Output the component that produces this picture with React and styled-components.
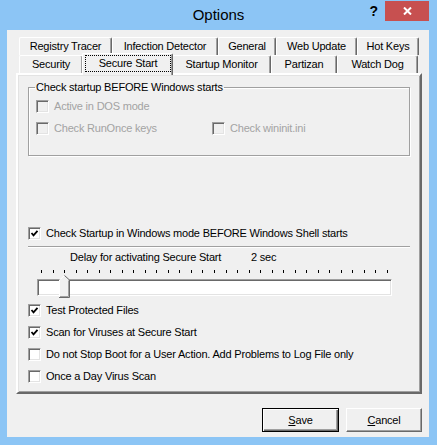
import React from 'react';
import styled, { createGlobalStyle } from 'styled-components';

const GlobalStyle = createGlobalStyle`
    html, body {
        margin: 0;
        padding: 0;
    }
    body {
        width: 437px;
        height: 445px;
        overflow: hidden;
        font-family: "Liberation Sans", Arial, sans-serif;
        font-size: 11px;
        letter-spacing: -0.2px;
        color: #000;
    }
    * {
        box-sizing: border-box;
    }
`

const Window = styled.div`
    width: 437px;
    height: 445px;
    background-color: #8cc5f5;
    display: flex;
    flex-direction: column;
`

const TitleBar = styled.div`
    height: 30px;
    display: grid;
    grid-template-columns: 1fr auto 1fr;
    align-items: start;
    letter-spacing: 0;
`

const Title = styled.div`
    grid-column: 2;
    font-size: 15px;
    line-height: 30px;
    color: #000;
`

const Controls = styled.div`
    grid-column: 3;
    justify-self: end;
    display: flex;
    align-items: center;
    padding: 1px 8px 0 0;
    gap: 7px;
`

const Help = styled.span`
    font-weight: bold;
    font-size: 14px;
    line-height: 20px;
`

const CloseButton = styled.div`
    width: 44px;
    height: 20px;
    background-color: #c75050;
    display: flex;
    align-items: center;
    justify-content: center;
`

const Client = styled.div`
    flex: 1;
    margin: 0 8px 8px 7px;
    background-color: #f0f0f0;
    padding: 7px 7px 0 9px;
    display: flex;
    flex-direction: column;
`

const TabRow = styled.div`
    display: flex;
    align-items: flex-start;
    margin-left: 3px;
    height: 18px;
`

const Tab = styled.div`
    width: ${p => p.$active ? p.$w + 2 : p.$w}px;
    height: ${p => p.$active ? 22 : 18}px;
    margin: ${p => p.$active ? '-2px -1px -2px' : '0'};
    position: relative;
    z-index: ${p => p.$active ? 1 : 0};
    background-color: #f0f0f0;
    border-top: 1px solid #fff;
    border-left: 1px solid #fff;
    border-right: 1px solid #696969;
    border-radius: 2px 2px 0 0;
    box-shadow: inset -1px 0 #a0a0a0;
    text-align: center;
    line-height: 17px;
    white-space: nowrap;
`

const Focus = styled.span`
    display: block;
    margin: 1px 1px 0 2px;
    border: 1px dotted #000;
    line-height: 15px;
`

const Panel = styled.div`
    height: 321px;
    border: 2px solid;
    border-color: #fff #696969 #696969 #fff;
    box-shadow: inset 1px 1px #e3e3e3, inset -1px -1px #a0a0a0;
    padding: 6px 10px 0 10px;
    display: flex;
    flex-direction: column;
`

const Group = styled.fieldset`
    margin: 0;
    padding: 1px 7px 16px 7px;
    min-width: 0;
    border: 1px solid #a0a0a0;
    box-shadow: inset 1px 1px #fff, 1px 1px #fff;
`

const Legend = styled.legend`
    padding: 0 1px;
    margin-left: -1px;
    line-height: 13px;
    font-size: 11px;
`

const GroupGrid = styled.div`
    display: grid;
    grid-template-columns: 176px 1fr;
`

const CheckRow = styled.label`
    display: flex;
    align-items: center;
    gap: 5px;
    height: 22px;
    margin-top: ${p => p.$top || 0}px;
    color: ${p => p.$disabled ? '#a3a3a3' : '#000'};
    white-space: nowrap;
    grid-column: ${p => p.$span ? '1 / -1' : 'auto'};
`

const Box = styled.span`
    width: 13px;
    height: 13px;
    flex: none;
    border: 1px solid;
    border-color: #a0a0a0 #fff #fff #a0a0a0;
    box-shadow: inset 1px 1px #696969, inset -1px -1px #e3e3e3;
    background-color: ${p => p.$disabled ? '#f0f0f0' : '#fff'};
    display: flex;
    align-items: center;
    justify-content: center;
`

const Separator = styled.div`
    margin-top: 2px;
    border-top: 1px solid #a0a0a0;
    border-bottom: 1px solid #fff;
`

const DelayLabel = styled.div`
    height: 18px;
    line-height: 18px;
    padding-left: 42px;
    white-space: nowrap;
    span {
        display: inline-block;
        width: 181px;
    }
`

const Slider = styled.div`
    position: relative;
    margin-left: 9px;
    width: 355px;
    height: 33px;
`

const Ticks = styled.div`
    display: flex;
    justify-content: space-between;
    padding: 4px 4px 0;
    height: 7px;
`

const Tick = styled.span`
    width: 1px;
    height: 3px;
    background-color: #000;
`

const Track = styled.div`
    margin-top: 6px;
    height: 17px;
    background-color: #fff;
    border: 1px solid;
    border-color: #a0a0a0 #fff #fff #a0a0a0;
    box-shadow: inset 1px 1px #696969, inset -1px -1px #e3e3e3;
`

const Thumb = styled.svg`
    position: absolute;
    top: 9px;
`

const ButtonRow = styled.div`
    display: flex;
    justify-content: flex-end;
    gap: 7px;
    margin-top: 14px;
`

const Button = styled.div`
    width: ${p => p.$w}px;
    height: 24px;
    background-color: #f0f0f0;
    border: 1px solid;
    border-color: ${p => p.$default ? '#000' : '#fff #696969 #696969 #fff'};
    box-shadow: ${p => p.$default
        ? 'inset 1px 1px #fff, inset -1px -1px #696969, inset -2px -2px #a0a0a0'
        : 'inset -1px -1px #a0a0a0'};
    display: flex;
    align-items: center;
    justify-content: center;
`

const Check = ({ checked, disabled }) => (
    <Box $disabled={disabled}>
        {checked && (
            <svg width="9" height="9" viewBox="0 0 9 9">
                <polyline points="1.5,4 3.5,6.3 7.5,1.8" fill="none" stroke="#000" strokeWidth="1.8" />
            </svg>
        )}
    </Box>
);

const Option = ({ label, checked, disabled, top, span }) => (
    <CheckRow $disabled={disabled} $top={top} $span={span}>
        <Check checked={checked} disabled={disabled} />
        {label}
    </CheckRow>
);

const backTabs = [
    ['Registry Tracer', 93],
    ['Infection Detector', 106],
    ['General', 58],
    ['Web Update', 81],
    ['Hot Keys', 62],
];

const frontTabs = [
    ['Security', 64],
    ['Secure Start', 89, true],
    ['Startup Monitor', 99],
    ['Partizan', 66],
    ['Watch Dog', 81],
];

const TICKS = 31;
const DELAY = 2;

const App = () => {
    const thumbLeft = 4 + DELAY * (347 / (TICKS - 1)) - 5;
    return (
        <Window>
            <GlobalStyle />
            <TitleBar>
                <Title>Options</Title>
                <Controls>
                    <Help>?</Help>
                    <CloseButton>
                        <svg width="9" height="8" viewBox="0 0 9 8">
                            <path d="M1 0.5 L8 7.5 M8 0.5 L1 7.5" stroke="#fff" strokeWidth="2" />
                        </svg>
                    </CloseButton>
                </Controls>
            </TitleBar>
            <Client>
                <TabRow>
                    {backTabs.map(([name, w]) => <Tab key={name} $w={w}>{name}</Tab>)}
                </TabRow>
                <TabRow>
                    {frontTabs.map(([name, w, active]) => (
                        <Tab key={name} $w={w} $active={active}>
                            {active ? <Focus>{name}</Focus> : name}
                        </Tab>
                    ))}
                </TabRow>
                <Panel>
                    <Group>
                        <Legend>Check startup BEFORE Windows starts</Legend>
                        <GroupGrid>
                            <Option label="Active in DOS mode" disabled span />
                            <Option label="Check RunOnce keys" disabled />
                            <Option label="Check wininit.ini" disabled />
                        </GroupGrid>
                    </Group>
                    <Option label="Check Startup in Windows mode BEFORE Windows Shell starts" checked top={66} />
                    <Separator />
                    <DelayLabel>
                        <span>Delay for activating Secure Start</span>2 sec
                    </DelayLabel>
                    <Slider>
                        <Ticks>
                            {Array.from({ length: TICKS }, (_, i) => <Tick key={i} />)}
                        </Ticks>
                        <Track />
                        <Thumb width="11" height="23" viewBox="0 0 11 23" style={{ left: thumbLeft }}>
                            <polygon points="0.5,5 5.5,0.5 10.5,5 10.5,22.5 0.5,22.5" fill="#f0f0f0" />
                            <polyline points="0.5,22 0.5,5 5.5,0.5" fill="none" stroke="#fff" />
                            <polyline points="5.5,0.5 10.5,5 10.5,22.5 0,22.5" fill="none" stroke="#696969" />
                            <polyline points="9.5,5.5 9.5,21.5 1,21.5" fill="none" stroke="#a0a0a0" />
                        </Thumb>
                    </Slider>
                    <Option label="Test Protected Files" checked />
                    <Option label="Scan for Viruses at Secure Start" checked />
                    <Option label="Do not Stop Boot for a User Action. Add Problems to Log File only" />
                    <Option label="Once a Day Virus Scan" />
                </Panel>
                <ButtonRow>
                    <Button $w={77} $default><span><u>S</u>ave</span></Button>
                    <Button $w={76}><span><u>C</u>ancel</span></Button>
                </ButtonRow>
            </Client>
        </Window>
    );
};

export default App;
